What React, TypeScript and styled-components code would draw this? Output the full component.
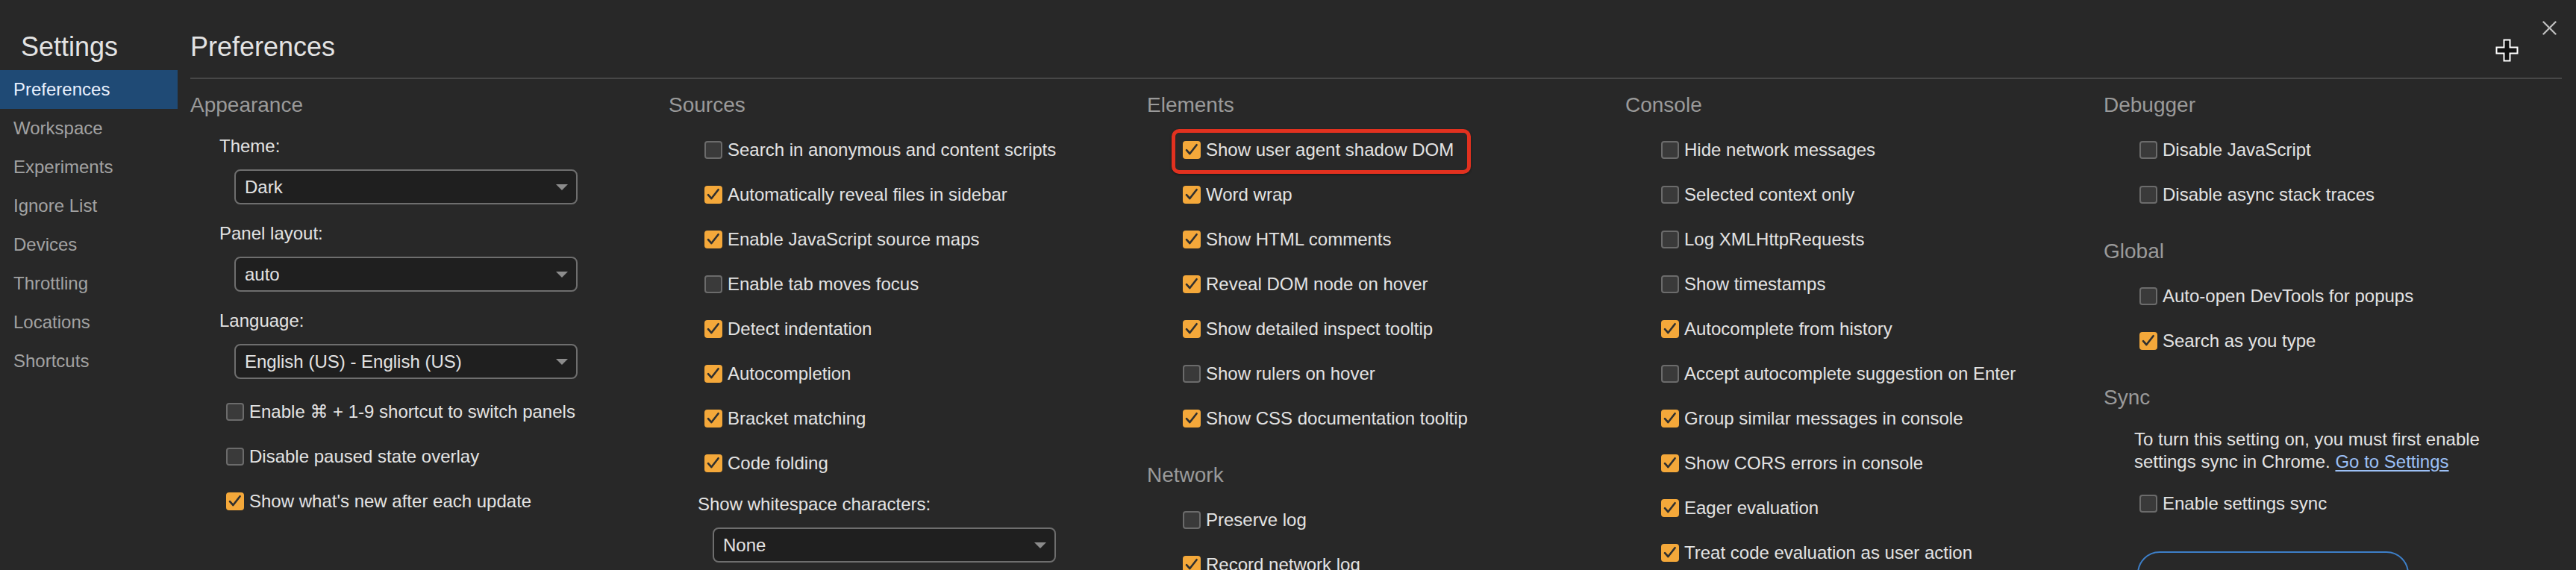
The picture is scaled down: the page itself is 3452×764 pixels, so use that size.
import React from "react";
import styled, { createGlobalStyle, css } from "styled-components";

const GlobalStyle = createGlobalStyle`
  html, body { margin: 0; padding: 0; background: #282828; }
  body { font-family: "Liberation Sans", Arial, "DejaVu Sans", sans-serif; }
  #root { width: 3452px; height: 764px; overflow: hidden; }
`;

const Page = styled.div`
  position: relative;
  display: flex;
  width: 3452px;
  height: 764px;
  overflow: hidden;
  background: #282828;
  color: #e3e3e3;
  font-family: "Liberation Sans", Arial, "DejaVu Sans", sans-serif;
`;

const Sidebar = styled.nav`
  flex: none;
  width: 238px;
  display: flex;
  flex-direction: column;
`;

const SidebarTitle = styled.h1`
  flex: none;
  margin: 0;
  height: 94px;
  box-sizing: border-box;
  padding: 43px 0 0 28px;
  font-size: 36px;
  line-height: 40px;
  font-weight: 400;
  color: #e3e3e3;
`;

const NavItem = styled.div<{ $selected?: boolean }>`
  flex: none;
  height: 52px;
  padding-left: 18px;
  font-size: 24px;
  line-height: 52px;
  white-space: nowrap;
  color: ${(p) => (p.$selected ? "#e8f0fe" : "#a2a2a2")};
  background: ${(p) => (p.$selected ? "#1f4a75" : "transparent")};
`;

const Main = styled.main`
  flex: 1;
  min-width: 0;
  display: flex;
  flex-direction: column;
  padding-left: 17px;
`;

const Header = styled.header`
  flex: none;
  display: flex;
  align-items: flex-start;
  height: 106px;
  box-sizing: border-box;
  padding-top: 28px;
  margin-right: 19px;
  border-bottom: 2px solid #474747;
`;

const Title = styled.h2`
  margin: 15px 0 0;
  font-size: 36px;
  line-height: 40px;
  font-weight: 400;
  color: #e3e3e3;
`;

const CloseButton = styled.button`
  margin-left: auto;
  margin-right: 7px;
  width: 19px;
  height: 19px;
  padding: 0;
  border: none;
  background: transparent;
  display: flex;
`;

const Columns = styled.div`
  flex: none;
  display: grid;
  grid-template-columns: repeat(4, 641px) 1fr;
  align-items: start;
  padding-top: 19px;
`;

const Column = styled.div`
  display: flex;
  flex-direction: column;
`;

const Section = styled.section`
  & + & {
    margin-top: 30px;
  }
`;

const SectionTitle = styled.h3`
  margin: 0 0 14px;
  height: 32px;
  font-size: 28px;
  line-height: 32px;
  font-weight: 400;
  color: #9a9a9a;
`;

const Row = styled.label<{ $highlight?: boolean }>`
  display: flex;
  align-items: center;
  gap: 7px;
  height: 60px;
  width: fit-content;
  padding-left: 48px;
  font-size: 24px;
  line-height: 28px;
  white-space: nowrap;
  color: #e3e3e3;
  ${(p) =>
    p.$highlight &&
    css`
      position: relative;
      &::after {
        content: "";
        position: absolute;
        left: 33px;
        right: -23px;
        top: 2px;
        bottom: -2px;
        border: 5px solid #e2311f;
        border-radius: 10px;
        box-shadow: 0 1px 3px rgba(0, 0, 0, 0.45);
      }
    `}
`;

const Box = styled.span<{ $checked?: boolean }>`
  flex: none;
  width: 24px;
  height: 24px;
  box-sizing: border-box;
  border-radius: 4px;
  display: flex;
  align-items: center;
  justify-content: center;
  ${(p) =>
    p.$checked
      ? css`
          background: #f4a83a;
        `
      : css`
          background: #3a3a3a;
          border: 2px solid #6b6b6b;
        `}
`;

const FieldGroup = styled.div`
  padding: 11px 0 14px 39px;
`;

const FieldLabel = styled.div`
  height: 28px;
  font-size: 24px;
  line-height: 28px;
  white-space: nowrap;
  color: #e3e3e3;
`;

const SelectBox = styled.div`
  margin: 17px 0 0 20px;
  width: 460px;
  height: 47px;
  box-sizing: border-box;
  display: flex;
  align-items: center;
  justify-content: space-between;
  padding: 0 11px 0 12px;
  border: 2px solid #6e6e6e;
  border-radius: 8px;
  background: #1f1f1f;
  font-size: 24px;
  color: #e3e3e3;
  white-space: nowrap;
`;

const SyncText = styled.p`
  margin: 0;
  padding: 11px 0 11px 41px;
  width: 520px;
  font-size: 24px;
  line-height: 30px;
  color: #e3e3e3;
`;

const Link = styled.a`
  color: #9cc0f6;
  text-decoration: underline;
  text-underline-offset: 3px;
`;

const SyncCard = styled.div`
  margin: 34px 0 0 45px;
  width: 364px;
  height: 60px;
  box-sizing: border-box;
  border: 2px solid #3d7fc8;
  border-radius: 30px;
`;

const Cursor = styled.svg`
  position: absolute;
  left: 3344px;
  top: 52px;
  width: 31px;
  height: 31px;
  pointer-events: none;
`;

const Check = () => (
  <svg width="24" height="24" viewBox="0 0 24 24">
    <path d="M5 12.2 L9.4 17 L18.6 5.2" fill="none" stroke="#2f2f2f" strokeWidth="2.6" strokeLinecap="round" strokeLinejoin="round" />
  </svg>
);

const Checkbox = ({ checked, label, highlight }: { checked?: boolean; label: string; highlight?: boolean }) => (
  <Row $highlight={highlight}>
    <Box $checked={checked}>{checked && <Check />}</Box>
    <span>{label}</span>
  </Row>
);

const Select = ({ label, value }: { label: string; value: string }) => (
  <FieldGroup>
    <FieldLabel>{label}</FieldLabel>
    <SelectBox>
      <span>{value}</span>
      <svg width="16" height="8" viewBox="0 0 16 8">
        <path d="M0 0 H16 L8 8 Z" fill="#8c8c8c" />
      </svg>
    </SelectBox>
  </FieldGroup>
);

const navItems = ["Preferences", "Workspace", "Experiments", "Ignore List", "Devices", "Throttling", "Locations", "Shortcuts"];

export default function App() {
  return (
    <Page>
      <GlobalStyle />
      <Sidebar>
        <SidebarTitle>Settings</SidebarTitle>
        {navItems.map((n, i) => (
          <NavItem key={n} $selected={i === 0}>
            {n}
          </NavItem>
        ))}
      </Sidebar>
      <Main>
        <Header>
          <Title>Preferences</Title>
          <CloseButton aria-label="Close">
            <svg width="19" height="19" viewBox="0 0 19 19">
              <path d="M1.5 1.5 L17.5 17.5 M17.5 1.5 L1.5 17.5" stroke="#bdbdbd" strokeWidth="2.4" strokeLinecap="round" />
            </svg>
          </CloseButton>
        </Header>
        <Columns>
          <Column>
            <Section>
              <SectionTitle>Appearance</SectionTitle>
              <Select label="Theme:" value="Dark" />
              <Select label="Panel layout:" value="auto" />
              <Select label="Language:" value="English (US) - English (US)" />
              <Checkbox label="Enable ⌘ + 1-9 shortcut to switch panels" />
              <Checkbox label="Disable paused state overlay" />
              <Checkbox checked label="Show what's new after each update" />
            </Section>
          </Column>
          <Column>
            <Section>
              <SectionTitle>Sources</SectionTitle>
              <Checkbox label="Search in anonymous and content scripts" />
              <Checkbox checked label="Automatically reveal files in sidebar" />
              <Checkbox checked label="Enable JavaScript source maps" />
              <Checkbox label="Enable tab moves focus" />
              <Checkbox checked label="Detect indentation" />
              <Checkbox checked label="Autocompletion" />
              <Checkbox checked label="Bracket matching" />
              <Checkbox checked label="Code folding" />
              <Select label="Show whitespace characters:" value="None" />
            </Section>
          </Column>
          <Column>
            <Section>
              <SectionTitle>Elements</SectionTitle>
              <Checkbox checked highlight label="Show user agent shadow DOM" />
              <Checkbox checked label="Word wrap" />
              <Checkbox checked label="Show HTML comments" />
              <Checkbox checked label="Reveal DOM node on hover" />
              <Checkbox checked label="Show detailed inspect tooltip" />
              <Checkbox label="Show rulers on hover" />
              <Checkbox checked label="Show CSS documentation tooltip" />
            </Section>
            <Section>
              <SectionTitle>Network</SectionTitle>
              <Checkbox label="Preserve log" />
              <Checkbox checked label="Record network log" />
            </Section>
          </Column>
          <Column>
            <Section>
              <SectionTitle>Console</SectionTitle>
              <Checkbox label="Hide network messages" />
              <Checkbox label="Selected context only" />
              <Checkbox label="Log XMLHttpRequests" />
              <Checkbox label="Show timestamps" />
              <Checkbox checked label="Autocomplete from history" />
              <Checkbox label="Accept autocomplete suggestion on Enter" />
              <Checkbox checked label="Group similar messages in console" />
              <Checkbox checked label="Show CORS errors in console" />
              <Checkbox checked label="Eager evaluation" />
              <Checkbox checked label="Treat code evaluation as user action" />
            </Section>
          </Column>
          <Column>
            <Section>
              <SectionTitle>Debugger</SectionTitle>
              <Checkbox label="Disable JavaScript" />
              <Checkbox label="Disable async stack traces" />
            </Section>
            <Section>
              <SectionTitle>Global</SectionTitle>
              <Checkbox label="Auto-open DevTools for popups" />
              <Checkbox checked label="Search as you type" />
            </Section>
            <Section>
              <SectionTitle>Sync</SectionTitle>
              <SyncText>
                To turn this setting on, you must first enable settings sync in Chrome.{" "}
                <Link href="#">Go to Settings</Link>
              </SyncText>
              <Checkbox label="Enable settings sync" />
              <SyncCard />
            </Section>
          </Column>
        </Columns>
      </Main>
      <Cursor viewBox="0 0 31 31">
        <path d="M11.5 1.5 H19.5 V11.5 H29.5 V19.5 H19.5 V29.5 H11.5 V19.5 H1.5 V11.5 H11.5 Z" fill="#111" stroke="#fff" strokeWidth="2" />
      </Cursor>
    </Page>
  );
}
